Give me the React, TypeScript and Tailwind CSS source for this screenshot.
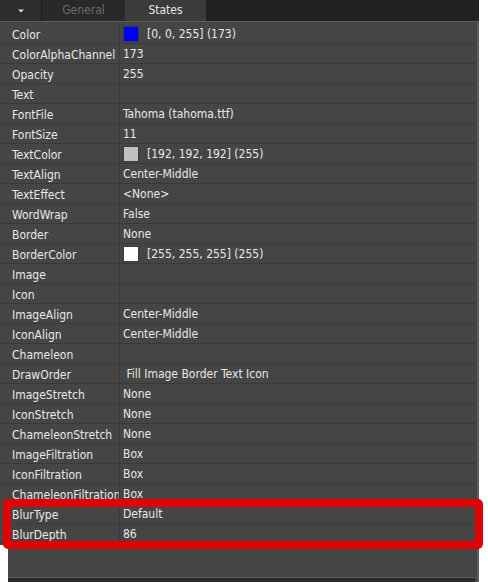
import React from "react";

type Row = { label: string; value: string; swatch?: string };

const rows: Row[] = [
  { label: "Color", value: "[0, 0, 255] (173)", swatch: "#0000ff" },
  { label: "ColorAlphaChannel", value: "173" },
  { label: "Opacity", value: "255" },
  { label: "Text", value: "" },
  { label: "FontFile", value: "Tahoma (tahoma.ttf)" },
  { label: "FontSize", value: "11" },
  { label: "TextColor", value: "[192, 192, 192] (255)", swatch: "#c0c0c0" },
  { label: "TextAlign", value: "Center-Middle" },
  { label: "TextEffect", value: "<None>" },
  { label: "WordWrap", value: "False" },
  { label: "Border", value: "None" },
  { label: "BorderColor", value: "[255, 255, 255] (255)", swatch: "#ffffff" },
  { label: "Image", value: "" },
  { label: "Icon", value: "" },
  { label: "ImageAlign", value: "Center-Middle" },
  { label: "IconAlign", value: "Center-Middle" },
  { label: "Chameleon", value: "" },
  { label: "DrawOrder", value: "\u00a0Fill Image Border Text Icon" },
  { label: "ImageStretch", value: "None" },
  { label: "IconStretch", value: "None" },
  { label: "ChameleonStretch", value: "None" },
  { label: "ImageFiltration", value: "Box" },
  { label: "IconFiltration", value: "Box" },
  { label: "ChameleonFiltration", value: "Box" },
  { label: "BlurType", value: "Default" },
  { label: "BlurDepth", value: "86" },
];

function PropRow({ row }: { row: Row }) {
  return (
    <div className="flex h-[20px] border-b border-[#393939] text-[12px] leading-[20px] text-[#e8e8e8]">
      <div className="w-[120px] shrink-0 pl-[12px] pt-px border-r border-[#393939] whitespace-nowrap overflow-hidden">
        {row.label}
      </div>
      <div className="flex items-center pl-[3px] whitespace-nowrap">
        {row.swatch && (
          <span
            className="mr-[8px] h-[16px] w-[16px] shrink-0 border border-[#3a3a3a]"
            style={{ backgroundColor: row.swatch }}
          />
        )}
        <span className="pt-px">{row.value}</span>
      </div>
    </div>
  );
}

export default function App() {
  return (
    <div
      className="relative h-[582px] w-[488px] overflow-hidden bg-white"
      style={{
        fontFamily: "'DejaVu Sans Condensed', 'DejaVu Sans', sans-serif",
        fontStretch: "condensed",
      }}
    >
      <div className="flex h-[582px] w-[479px] flex-col bg-[#212121]">
        {/* tabs */}
        <div className="flex h-[21px] shrink-0 text-[12px] leading-[21px]">
          <div className="flex w-[42px] items-center justify-center border-r border-[#1b1b1b] bg-[#2e2e2e]">
            <svg width="8" height="6" viewBox="0 0 8 6">
              <path d="M1 1.5 L4 4.5 L7 1.5 Z" fill="#d8d8d8" />
            </svg>
          </div>
          <div className="w-[83px] bg-[#292929] text-center text-[#6b6b6b]">General</div>
          <div className="w-[81px] bg-[#3b3b3b] text-center text-[#e4e4e4]">States</div>
        </div>

        {/* grid */}
        <div className="flex flex-1 flex-col border-t border-r-[2px] border-[#5b5b5b] bg-[#454545] pt-[2px] pr-[2px]">
          {rows.map((r) => (
            <PropRow key={r.label} row={r} />
          ))}
          <div className="flex-1" />
          <div className="h-[1px] bg-[#5b5b5b]" />
          <div className="h-[4px] bg-[#2a2a2a]" />
        </div>
      </div>

      {/* white strip lower left */}
      <div className="absolute left-0 top-[545px] h-[37px] w-[8px] bg-white" />

      {/* red annotation */}
      <div className="absolute left-[3px] top-[499px] h-[50px] w-[480px] rounded-[5px] border-[8px] border-[#e30000]" />
    </div>
  );
}
